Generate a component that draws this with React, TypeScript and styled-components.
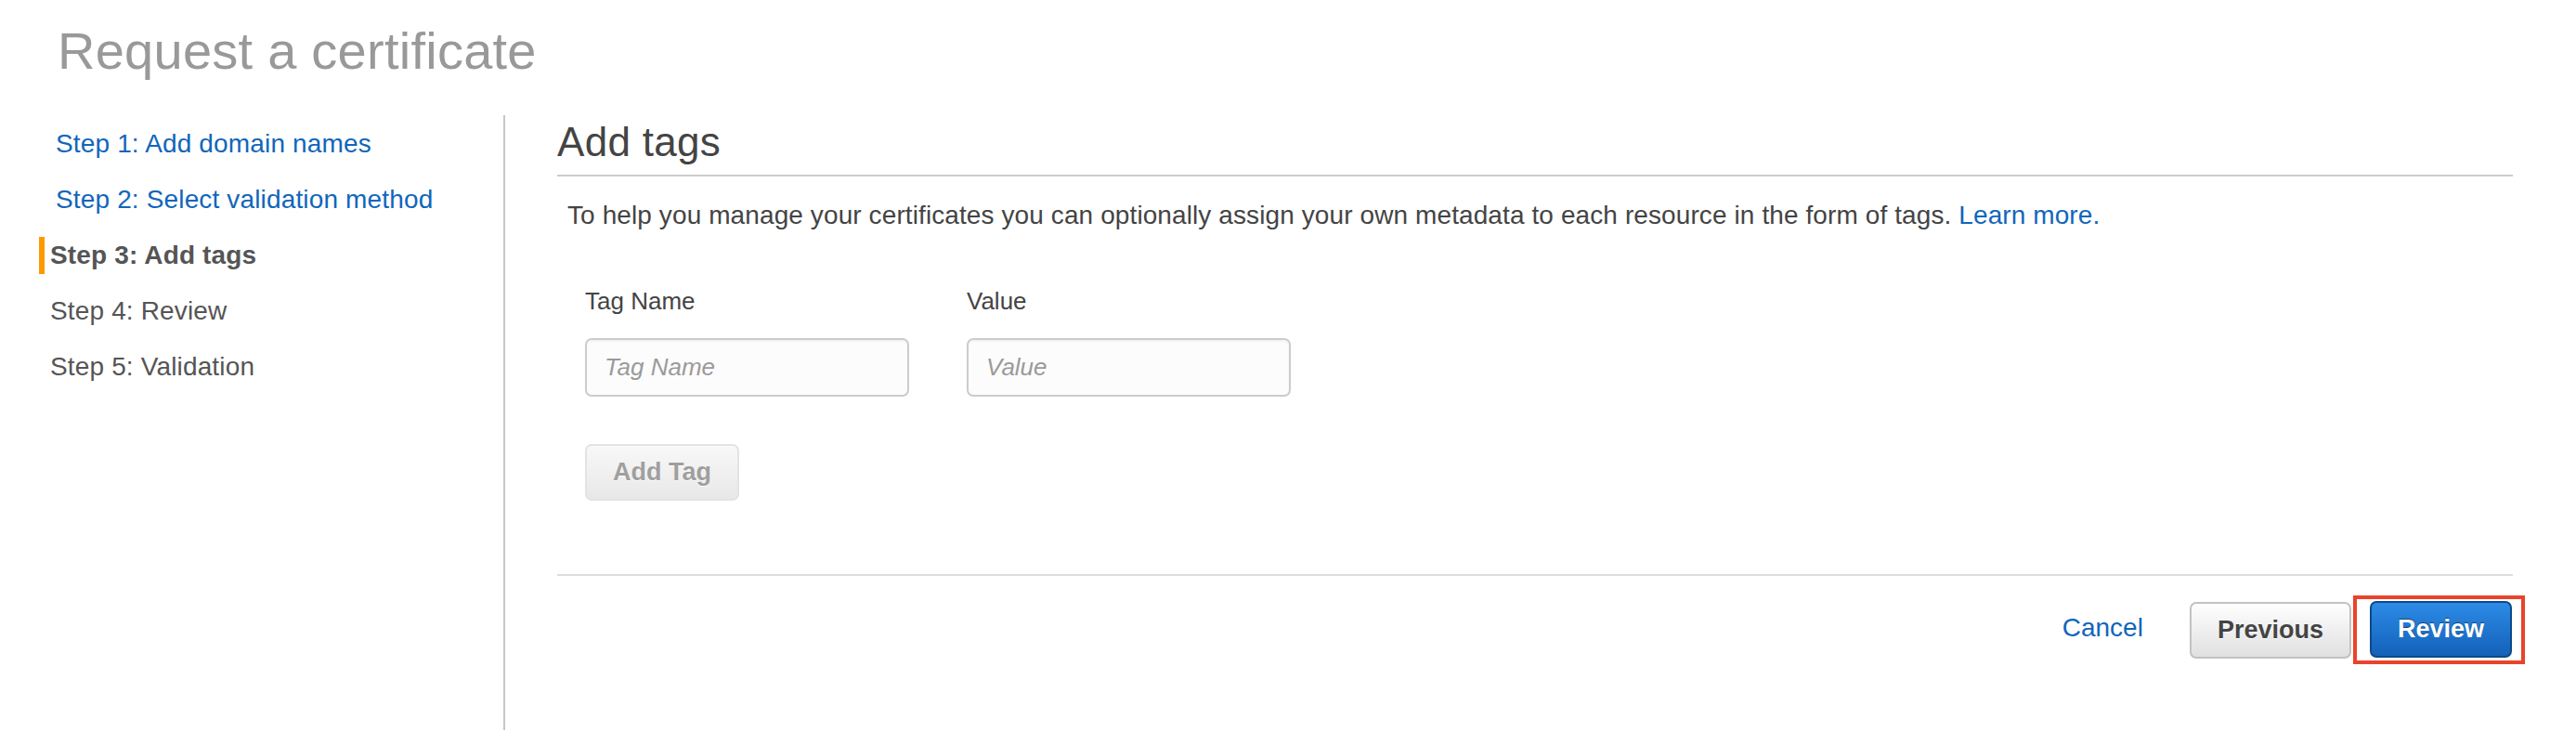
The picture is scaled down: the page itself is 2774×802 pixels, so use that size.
import React from 'react';
import styled, { createGlobalStyle } from 'styled-components';

const GlobalStyle = createGlobalStyle`
  html, body {
    margin: 0;
    padding: 0;
    background: #ffffff;
    font-family: "Liberation Sans", Arial, Helvetica, sans-serif;
  }
`;

const Page = styled.div`
  width: 2774px;
  height: 802px;
  padding-top: 27px;
  box-sizing: border-box;
`;

const Title = styled.h1`
  margin: 0 0 0 62px;
  font-size: 56px;
  line-height: 56px;
  letter-spacing: 0.25px;
  font-weight: normal;
  color: #999999;
`;

const Body = styled.div`
  display: flex;
  margin-top: 41px;
  height: 662px;
`;

const Sidebar = styled.nav`
  width: 544px;
  flex-shrink: 0;
  box-sizing: border-box;
  padding: 1px 0 0 42px;
  border-right: 2px solid #c8c8c8;
`;

const StepItem = styled.div`
  height: 60px;
  display: flex;
  align-items: center;
`;

const StepLabel = styled.span<{ $state: 'done' | 'active' | 'todo' }>`
  font-size: 28px;
  line-height: 40px;
  letter-spacing: 0.15px;
  padding-left: ${({ $state }) => ($state === 'done' ? '18px' : $state === 'active' ? '6px' : '12px')};
  border-left: ${({ $state }) => ($state === 'active' ? '6px solid #ff9900' : 'none')};
  font-weight: ${({ $state }) => ($state === 'active' ? 'bold' : 'normal')};
  color: ${({ $state }) => ($state === 'done' ? '#1166bb' : '#555555')};
  cursor: ${({ $state }) => ($state === 'done' ? 'pointer' : 'default')};
`;

const Main = styled.main`
  flex: 1;
  padding: 4px 68px 0 56px;
`;

const SectionHeading = styled.h2`
  margin: 0;
  font-size: 44px;
  line-height: 50px;
  letter-spacing: 0.3px;
  font-weight: normal;
  color: #444444;
  padding-bottom: 10px;
  border-bottom: 2px solid #cccccc;
`;

const Intro = styled.p`
  margin: 22px 0 0 0;
  padding-left: 11px;
  font-size: 28px;
  line-height: 40px;
  letter-spacing: 0.1px;
  color: #444444;
`;

const Link = styled.a`
  color: #1166bb;
  text-decoration: none;
  cursor: pointer;
`;

const TagForm = styled.div`
  margin-top: 54px;
  padding-left: 30px;
`;

const FieldRow = styled.div`
  display: flex;
  gap: 62px;
`;

const Field = styled.div`
  width: 349px;
  display: flex;
  flex-direction: column;
  gap: 22px;
`;

const FieldLabel = styled.label`
  font-size: 26px;
  line-height: 36px;
  color: #444444;
`;

const TextInput = styled.input`
  box-sizing: border-box;
  width: 349px;
  height: 63px;
  padding: 0 19px;
  border: 2px solid #cccccc;
  border-radius: 7px;
  background: #fcfcfc;
  box-shadow: inset 0 2px 2px rgba(0, 0, 0, 0.04);
  font-family: inherit;
  font-size: 26px;
  color: #444444;
  outline: none;

  &::placeholder {
    color: #9a9a9a;
    font-style: italic;
  }
`;

const Button = styled.button<{ $variant: 'primary' | 'secondary' | 'disabled' }>`
  box-sizing: border-box;
  height: 61px;
  padding: 0 28px;
  border-radius: 7px;
  font-family: inherit;
  font-size: 27px;
  font-weight: bold;
  cursor: ${({ $variant }) => ($variant === 'disabled' ? 'default' : 'pointer')};
  border: 2px solid
    ${({ $variant }) =>
      $variant === 'primary' ? '#0b4a8a' : $variant === 'secondary' ? '#c2c2c2' : '#e3e3e3'};
  background: ${({ $variant }) =>
    $variant === 'primary'
      ? 'linear-gradient(to bottom, #2c8be6, #1461b9)'
      : $variant === 'secondary'
      ? 'linear-gradient(to bottom, #fefefe, #e0e0e0)'
      : 'linear-gradient(to bottom, #f8f8f8, #e8e8e8)'};
  color: ${({ $variant }) =>
    $variant === 'primary' ? '#ffffff' : $variant === 'secondary' ? '#444444' : '#9f9f9f'};
  text-shadow: ${({ $variant }) =>
    $variant === 'primary' ? '0 -1px 1px rgba(0, 0, 0, 0.45)' : '0 1px 0 #ffffff'};
`;

const AddTagButton = styled(Button)`
  margin-top: 51px;
  width: 166px;
  padding: 0;
`;

const Footer = styled.div`
  margin-top: 79px;
  border-top: 2px solid #dddddd;
  padding-top: 21px;
  display: flex;
  justify-content: flex-end;
  align-items: center;
`;

const CancelLink = styled(Link)`
  font-size: 28px;
  margin-right: 50px;
  margin-bottom: 4px;
`;

const Highlight = styled.div`
  margin-left: 2px;
  margin-right: -13px;
  padding: 2px 10px 3px 14px;
  border: 4px solid #e8432c;
`;

const steps: { label: string; state: 'done' | 'active' | 'todo' }[] = [
  { label: 'Step 1: Add domain names', state: 'done' },
  { label: 'Step 2: Select validation method', state: 'done' },
  { label: 'Step 3: Add tags', state: 'active' },
  { label: 'Step 4: Review', state: 'todo' },
  { label: 'Step 5: Validation', state: 'todo' },
];

export default function App() {
  return (
    <Page>
      <GlobalStyle />
      <Title>Request a certificate</Title>
      <Body>
        <Sidebar>
          {steps.map((step) => (
            <StepItem key={step.label}>
              <StepLabel $state={step.state}>{step.label}</StepLabel>
            </StepItem>
          ))}
        </Sidebar>
        <Main>
          <SectionHeading>Add tags</SectionHeading>
          <Intro>
            To help you manage your certificates you can optionally assign your own metadata to each
            resource in the form of tags. <Link>Learn more.</Link>
          </Intro>
          <TagForm>
            <FieldRow>
              <Field>
                <FieldLabel>Tag Name</FieldLabel>
                <TextInput placeholder="Tag Name" />
              </Field>
              <Field>
                <FieldLabel>Value</FieldLabel>
                <TextInput placeholder="Value" />
              </Field>
            </FieldRow>
            <AddTagButton $variant="disabled">Add Tag</AddTagButton>
          </TagForm>
          <Footer>
            <CancelLink>Cancel</CancelLink>
            <Button $variant="secondary">Previous</Button>
            <Highlight>
              <Button $variant="primary">Review</Button>
            </Highlight>
          </Footer>
        </Main>
      </Body>
    </Page>
  );
}
